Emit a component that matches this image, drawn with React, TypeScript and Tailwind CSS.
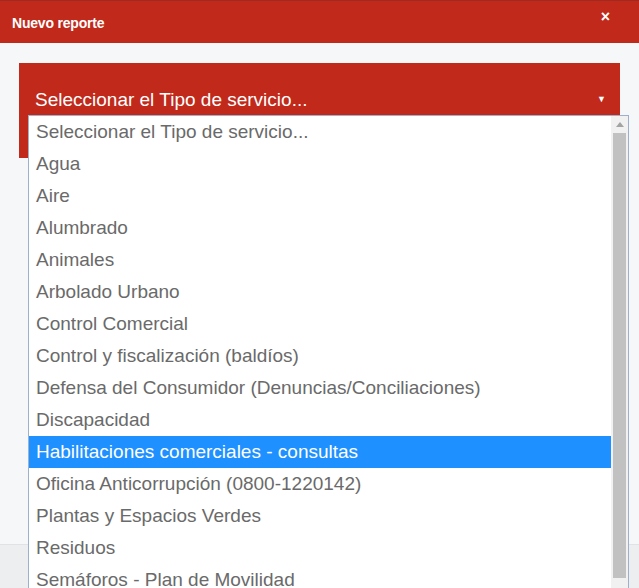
const opciones = [
  'Seleccionar el Tipo de servicio...',
  'Agua',
  'Aire',
  'Alumbrado',
  'Animales',
  'Arbolado Urbano',
  'Control Comercial',
  'Control y fiscalización (baldíos)',
  'Defensa del Consumidor (Denuncias/Conciliaciones)',
  'Discapacidad',
  'Habilitaciones comerciales - consultas',
  'Oficina Anticorrupción (0800-1220142)',
  'Plantas y Espacios Verdes',
  'Residuos',
  'Semáforos - Plan de Movilidad',
  'Tránsito',
]

const seleccionado = 10

function App() {
  return (
    <div
      className="relative w-[639px] h-[588px] overflow-hidden bg-[#f6f7f9] flex flex-col"
      style={{ fontFamily: '"Liberation Sans", Arial, sans-serif' }}
    >
      {/* cabecera */}
      <div className="h-[43px] shrink-0 bg-[#c1291b] border-t border-[#9e2a22] flex items-center justify-between pl-3 pr-[29px]">
        <span className="text-white text-[14px] font-bold tracking-[-0.2px] mt-[3px]">Nuevo reporte</span>
        <span className="text-white text-[16px] font-bold leading-none mb-[10px]">×</span>
      </div>

      <div className="flex-1 pt-[20px] px-[19px]">
        <div className="h-[95px] bg-[#c1291b] flex items-start justify-between pt-[23px] pl-4 pr-[14px]">
          <span className="text-white text-[19px]">Seleccionar el Tipo de servicio...</span>
          <span className="text-white text-[9px] mt-[7px]">▼</span>
        </div>
      </div>

      {/* pie */}
      <div className="h-[44px] shrink-0 bg-[#eceef0] border-t border-[#e0e2e5]" />

      {/* lista desplegada */}
      <div className="absolute left-[28px] top-[115px] w-[601px] h-[490px] bg-white border border-[#9fb0cc] flex">
        <div className="flex-1 flex flex-col">
          {opciones.map((op, i) => (
            <div
              key={i}
              className={
                i === seleccionado
                  ? 'h-[32px] shrink-0 flex items-center pl-[7px] text-[19px] bg-[#1e90ff] text-white'
                  : 'h-[32px] shrink-0 flex items-center pl-[7px] text-[19px] text-[#6a6a6a]'
              }
            >
              {op}
            </div>
          ))}
        </div>
        <div className="w-[17px] bg-[#f1f1f1] flex flex-col items-center">
          <div className="h-[17px] flex items-center justify-center">
            <svg width="8" height="5" viewBox="0 0 8 5">
              <path d="M0 5 L4 0 L8 5 Z" fill="#a3a3a3" />
            </svg>
          </div>
          <div className="w-[13px] h-[445px] bg-[#c1c1c1]" />
        </div>
      </div>
    </div>
  )
}

export default App
